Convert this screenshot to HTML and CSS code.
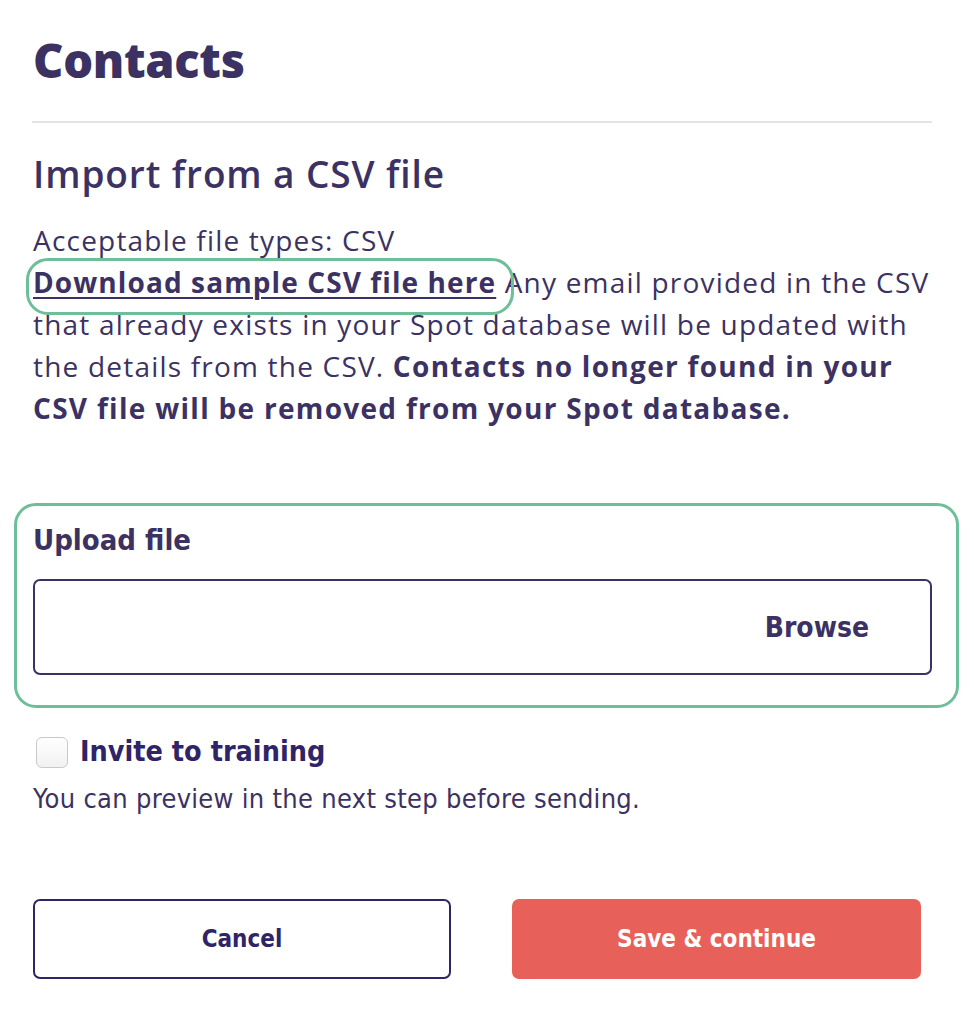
FILE: index.html
```html
<!DOCTYPE html>
<html lang="en">
<head>
<meta charset="utf-8">
<title>Contacts</title>
<link rel="stylesheet" href="styles.css">
</head>
<body>
<main class="page">
  <h1 class="title">Contacts</h1>
  <hr class="divider">
  <h2 class="subtitle">Import from a CSV file</h2>
  <p class="intro">Acceptable file types: CSV<br><span class="link-wrap"><a class="sample-link" href="#">Download sample CSV file here</a></span> Any email provided in the CSV that already exists in your Spot database will be updated with the details from the CSV. <strong>Contacts no longer found in your CSV file will be removed from your Spot database.</strong></p>

  <section class="upload">
    <label class="upload-label">Upload file</label>
    <div class="file-input">
      <span class="browse">Browse</span>
    </div>
  </section>

  <label class="check-row">
    <span class="checkbox"></span>
    <span class="check-label">Invite to training</span>
  </label>
  <p class="hint">You can preview in the next step before sending.</p>

  <div class="actions">
    <button class="btn btn-cancel">Cancel</button>
    <button class="btn btn-save">Save &amp; continue</button>
  </div>
</main>
</body>
</html>
```

FILE: styles.css
```css
html, body {
  margin: 0;
  padding: 0;
  background: #ffffff;
}

body {
  font-family: "Open Sans", "Noto Sans", sans-serif;
  color: #3b3263;
}

.page {
  width: 899px;
  padding: 32px 0 0 33px;
}

.title {
  margin: 0;
  font-family: "Open Sans", sans-serif;
  font-weight: 800;
  font-size: 47px;
  line-height: 56px;
  letter-spacing: -0.3px;
}

.divider {
  margin: 33px 0 0 -1px;
  border: 0;
  height: 2px;
  background: #e4e4e4;
}

.subtitle {
  margin: 29px 0 0;
  font-family: "Open Sans", sans-serif;
  font-weight: 600;
  font-size: 37px;
  line-height: 44px;
  letter-spacing: 0.9px;
}

.intro {
  margin: 23px 0 0;
  font-size: 28px;
  line-height: 42px;
  letter-spacing: 1.2px;
}

.intro strong {
  font-weight: 700;
  letter-spacing: 1.3px;
}

.link-wrap {
  position: relative;
}

.link-wrap::before {
  content: "";
  position: absolute;
  left: -7px;
  right: -18px;
  top: -5px;
  bottom: -14px;
  border: 3px solid #6dbf99;
  border-radius: 22px;
}

.sample-link {
  position: relative;
  color: #3b3263;
  font-weight: 700;
  letter-spacing: 1.1px;
  text-decoration: underline;
  text-decoration-thickness: 2px;
  text-underline-offset: 4px;
}

.upload {
  margin: 74px -27px 0 -19px;
  padding: 16px 24px 30px 16px;
  border: 3px solid #6dbf99;
  border-radius: 22px;
}

.upload-label {
  display: block;
  font-family: "DejaVu Sans", sans-serif;
  font-stretch: condensed;
  font-weight: 700;
  font-size: 29px;
  line-height: 36px;
}

.file-input {
  margin-top: 21px;
  height: 92px;
  border: 2px solid #3b3263;
  border-radius: 7px;
  display: flex;
  align-items: center;
  justify-content: flex-end;
  padding-right: 61px;
}

.browse {
  font-family: "DejaVu Sans", sans-serif;
  font-stretch: condensed;
  font-weight: 700;
  font-size: 28px;
}

.check-row {
  margin-top: 26px;
  display: flex;
  align-items: center;
  gap: 12px;
  padding-left: 3px;
}

.checkbox {
  width: 30px;
  height: 29px;
  border: 1px solid #c9c9c9;
  border-radius: 6px;
  background: linear-gradient(#ffffff, #f1f1f1);
}

.check-label {
  font-family: "DejaVu Sans", sans-serif;
  font-stretch: condensed;
  font-weight: 700;
  font-size: 28.5px;
  line-height: 36px;
  color: #2f2468;
}

.hint {
  margin: 13px 0 0;
  font-family: "DejaVu Sans", sans-serif;
  font-stretch: condensed;
  font-size: 27px;
  line-height: 32px;
  letter-spacing: 0.3px;
}

.actions {
  margin-top: 84px;
  display: flex;
  gap: 61px;
}

.btn {
  height: 80px;
  border-radius: 7px;
  font-family: "DejaVu Sans", sans-serif;
  font-stretch: condensed;
  font-weight: 700;
  font-size: 24px;
  cursor: pointer;
}

.btn-cancel {
  width: 418px;
  background: #ffffff;
  border: 2px solid #2f2468;
  color: #2f2468;
}

.btn-save {
  width: 409px;
  background: #e8605a;
  border: 0;
  color: #ffffff;
}
```
